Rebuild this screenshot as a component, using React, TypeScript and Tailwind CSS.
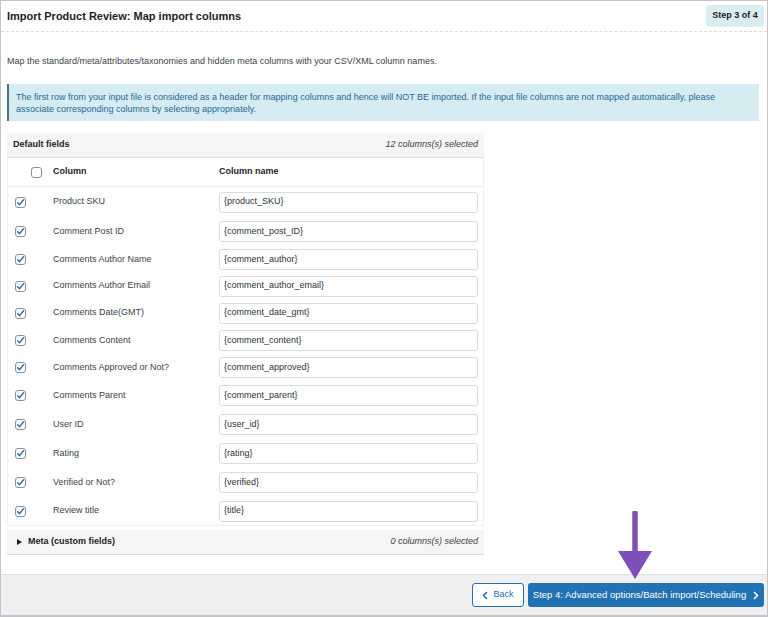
import React from "react";

const rows: { label: string; value: string; h: string }[] = [
  { label: "Product SKU", value: "{product_SKU}", h: "h-[30px]" },
  { label: "Comment Post ID", value: "{comment_post_ID}", h: "h-[29px]" },
  { label: "Comments Author Name", value: "{comment_author}", h: "h-[27px]" },
  { label: "Comments Author Email", value: "{comment_author_email}", h: "h-[26px]" },
  { label: "Comments Date(GMT)", value: "{comment_date_gmt}", h: "h-[28px]" },
  { label: "Comments Content", value: "{comment_content}", h: "h-[27px]" },
  { label: "Comments Approved or Not?", value: "{comment_approved}", h: "h-[27px]" },
  { label: "Comments Parent", value: "{comment_parent}", h: "h-[29px]" },
  { label: "User ID", value: "{user_id}", h: "h-[29px]" },
  { label: "Rating", value: "{rating}", h: "h-[29px]" },
  { label: "Verified or Not?", value: "{verified}", h: "h-[29px]" },
  { label: "Review title", value: "{title}", h: "h-[28px]" },
];

function Check({ checked }: { checked: boolean }) {
  return (
    <span className="w-[11px] h-[11px] rounded-[3px] border border-[#8c8f94] bg-white flex items-center justify-center">
      {checked && (
        <svg width="9" height="9" viewBox="0 0 10 10">
          <path d="M1.8 5.2 L4 7.4 L8.4 2" fill="none" stroke="#2271b1" strokeWidth="1.6" strokeLinecap="round" strokeLinejoin="round" />
        </svg>
      )}
    </span>
  );
}

export default function App() {
  return (
    <div
      className="w-[768px] h-[617px] bg-[#c3c4c7] p-[1px] pb-[2px] text-[#3c434a]"
      style={{ fontFamily: '"Liberation Sans", Arial, sans-serif' }}
    >
      <div className="w-full h-full bg-white flex flex-col">
        {/* header */}
        <div className="h-[31px] flex items-center justify-between pl-[6px] pr-[3px] border-b border-dashed border-[#dcdcde]">
          <div className="text-[11px] font-bold text-[#1d2327]">Import Product Review: Map import columns</div>
          <div className="h-[22px] w-[58px] rounded-[4px] bg-[#daedf3] flex items-center justify-center text-[9px] font-bold text-[#1d2327]">
            Step 3 of 4
          </div>
        </div>

        <div className="px-[6px] flex-1 flex flex-col">
          <div className="mt-[22px] text-[9px] leading-[14px]">
            Map the standard/meta/attributes/taxonomies and hidden meta columns with your CSV/XML column names.
          </div>

          <div className="mt-[16px] h-[37px] mr-[2px] bg-[#d4ecf2] border-l-[2px] border-[#4b6f85] pl-[7px] pr-[8px] flex flex-col justify-center text-[9px] leading-[12px] text-[#2a6a94]">
            <div className="whitespace-nowrap">
              The first row from your input file is considered as a header for mapping columns and hence will NOT BE imported. If the input file columns are not mapped automatically, please
            </div>
            <div>associate corresponding columns by selecting appropriately.</div>
          </div>

          {/* panel */}
          <div className="mt-[12px] w-[477px]">
            <div className="h-[25px] bg-[#f5f5f5] border-b border-[#dcdcde] flex items-center justify-between px-[6px] text-[9px]">
              <span className="font-bold text-[#1d2327]">Default fields</span>
              <span className="italic text-[#3c434a]">12 columns(s) selected</span>
            </div>
            <div className="border-x border-b border-[#f0f0f1]">
              <div className="h-[29px] flex items-center text-[9px] font-bold text-[#1d2327] border-b border-[#ececec]">
                <div className="w-[45px] flex justify-end pr-[11px]">
                  <Check checked={false} />
                </div>
                <div className="w-[166px]">Column</div>
                <div>Column name</div>
              </div>
              {rows.map((r) => (
                <div key={r.label} className={`${r.h} flex items-center text-[9px]`}>
                  <div className="w-[45px] pl-[7px]">
                    <Check checked />
                  </div>
                  <div className="w-[166px]">{r.label}</div>
                  <div className="w-[259px] h-[21px] border border-[#dcdcde] rounded-[3px] flex items-center px-[4px] text-[9px] text-[#2c3338]">
                    {r.value}
                  </div>
                </div>
              ))}
            </div>
            <div className="mt-[4px] h-[25px] bg-[#f5f5f5] border-b border-[#dcdcde] flex items-center justify-between pl-[10px] pr-[6px] text-[9px]">
              <span className="flex items-center gap-[6px] font-bold text-[#1d2327]">
                <svg width="5" height="6" viewBox="0 0 5 6">
                  <path d="M0 0 L5 3 L0 6 Z" fill="#1d2327" />
                </svg>
                Meta (custom fields)
              </span>
              <span className="italic text-[#3c434a]">0 columns(s) selected</span>
            </div>
          </div>
        </div>

        {/* footer */}
        <div className="relative h-[41px] bg-[#f0f0f1] border-t border-[#e2e2e2] flex items-center justify-end gap-[4px] pr-[3px]">
          <svg className="absolute left-[616px] top-[-64px]" width="36" height="70" viewBox="0 0 36 70">
            <path d="M18 2 L18 48" stroke="#7e4fb8" strokeWidth="5.5" strokeLinecap="round" />
            <path d="M1 40 L35 40 L18 68 Z" fill="#7e4fb8" />
          </svg>
          <button className="h-[24px] w-[52px] rounded-[3px] border border-[#2271b1] bg-white text-[#2271b1] text-[9px] flex items-center justify-center gap-[5px]">
            <svg width="6" height="9" viewBox="0 0 6 9">
              <path d="M5 1 L1.5 4.5 L5 8" fill="none" stroke="#2271b1" strokeWidth="1.5" />
            </svg>
            Back
          </button>
          <button className="h-[24px] w-[236px] rounded-[3px] bg-[#2271b1] text-white text-[9.5px] font-medium flex items-center justify-center gap-[7px]">
            Step 4: Advanced options/Batch import/Scheduling
            <svg width="6" height="9" viewBox="0 0 6 9">
              <path d="M1 1 L4.5 4.5 L1 8" fill="none" stroke="#ffffff" strokeWidth="1.5" />
            </svg>
          </button>
        </div>
      </div>
    </div>
  );
}
